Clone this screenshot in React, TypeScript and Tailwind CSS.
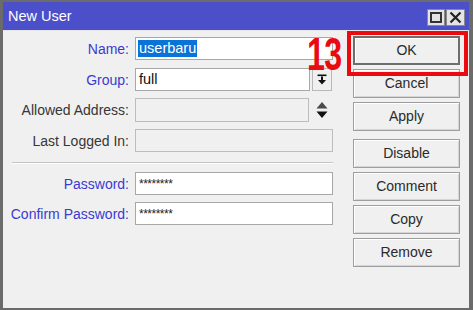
import React from "react";

const Label = ({ text, blue }: { text: string; blue?: boolean }) => (
  <div
    className={`w-[126px] text-right text-[14px] leading-none whitespace-nowrap ${
      blue ? "text-[#3a3ad0]" : "text-[#363636]"
    }`}
  >
    {text}
  </div>
);

const Btn = ({ text, main }: { text: string; main?: boolean }) => (
  <div
    className={`w-[107px] h-[29px] flex items-center justify-center text-[14px] text-[#2a2a2a] bg-[#f0f0f0] ${
      main
        ? "border-2 border-[#6e6e6e] shadow-[inset_1px_1px_0_#ffffff]"
        : "border border-[#9e9e9e] shadow-[inset_1px_1px_0_#ffffff,inset_-1px_-1px_0_#d6d6d6]"
    }`}
  >
    {text}
  </div>
);

export default function App() {
  return (
    <div className="relative w-[473px] h-[310px] bg-[#f0f0f0] border-l-[3px] border-r-[4px] border-t-2 border-b-2 border-[#6b6b6b] flex flex-col font-['Liberation_Sans',Arial,sans-serif] overflow-hidden">
      {/* title bar */}
      <div className="h-[28px] bg-[#4b4fc9] flex items-center pl-[5px] pr-[4px]">
        <span className="text-white text-[14.5px] leading-none">New User</span>
        <div className="flex-1" />
        <div className="flex gap-[1px] mt-[2px]">
          <div className="w-[18px] h-[17px] bg-[#e4e4e4] border border-[#8a8a8a] flex items-center justify-center">
            <div className="w-[12px] h-[11px] border-2 border-[#333]" />
          </div>
          <div className="w-[19px] h-[17px] bg-[#e4e4e4] border border-[#8a8a8a] flex items-center justify-center">
            <svg width="13" height="13" viewBox="0 0 13 13">
              <path d="M1.5 1.5 L11.5 11.5 M11.5 1.5 L1.5 11.5" stroke="#222" strokeWidth="2.2" />
            </svg>
          </div>
        </div>
      </div>

      {/* body */}
      <div className="flex flex-1 border-t border-[#e6e6e6]">
        {/* form */}
        <div className="w-[330px] pt-[6px] flex flex-col">
          <div className="h-[23px] flex items-center">
            <Label text="Name:" blue />
            <div className="ml-[6px] w-[198px] h-[23px] bg-white border border-[#a8a8a8] flex items-center pl-[2px]">
              <span className="bg-[#0a73d8] text-white text-[14.5px] leading-[17px] px-[1px]">userbaru</span>
            </div>
          </div>
          <div className="h-[23px] flex items-center mt-[8px]">
            <Label text="Group:" blue />
            <div className="ml-[6px] w-[175px] h-[23px] bg-white border border-[#a8a8a8] flex items-center pl-[3px] text-[14.5px] text-[#111]">
              full
            </div>
            <div className="ml-[2px] w-[20px] h-[23px] bg-[#f0f0f0] border border-[#b8b8b8] flex items-center justify-center">
              <svg width="10" height="11" viewBox="0 0 10 11">
                <rect x="0.5" y="0.5" width="9" height="1.6" fill="#111" />
                <rect x="4" y="2.5" width="2" height="4" fill="#111" />
                <path d="M1 6 L9 6 L5 10.5 Z" fill="#111" />
              </svg>
            </div>
          </div>
          <div className="h-[24px] flex items-center mt-[7px]">
            <Label text="Allowed Address:" />
            <div className="ml-[6px] w-[174px] h-[24px] bg-[#f0f0f0] border border-[#bdbdbd]" />
            <div className="ml-[4px] w-[18px] h-[24px] flex items-center justify-center">
              <svg width="12" height="18" viewBox="0 0 12 18">
                <path d="M6 1 L11.5 7.5 L0.5 7.5 Z" fill="#4a4a4a" />
                <path d="M0.5 10.5 L11.5 10.5 L6 17 Z" fill="#111" />
              </svg>
            </div>
          </div>
          <div className="h-[23px] flex items-center mt-[7px]">
            <Label text="Last Logged In:" />
            <div className="ml-[6px] w-[198px] h-[23px] bg-[#f0f0f0] border border-[#bdbdbd]" />
          </div>
          <div className="ml-[9px] w-[321px] mt-[10px] border-t border-[#c4c4c4] border-b border-b-white" />
          <div className="h-[23px] flex items-center mt-[8px]">
            <Label text="Password:" blue />
            <div className="ml-[6px] w-[198px] h-[23px] bg-white border border-[#a8a8a8] flex items-start pl-[3px] pt-[2px] text-[12px] text-[#222] tracking-[-0.5px]">
              ********
            </div>
          </div>
          <div className="h-[23px] flex items-center mt-[7px]">
            <Label text="Confirm Password:" blue />
            <div className="ml-[6px] w-[198px] h-[23px] bg-white border border-[#a8a8a8] flex items-start pl-[3px] pt-[2px] text-[12px] text-[#222] tracking-[-0.5px]">
              ********
            </div>
          </div>
        </div>

        {/* buttons */}
        <div className="pl-[20px] pt-[5px] flex flex-col gap-[4px]">
          <Btn text="OK" main />
          <Btn text="Cancel" />
          <Btn text="Apply" />
          <div className="mt-[4px]">
            <Btn text="Disable" />
          </div>
          <Btn text="Comment" />
          <Btn text="Copy" />
          <Btn text="Remove" />
        </div>
      </div>

      {/* annotation overlays */}
      <div className="absolute left-[344px] top-[29px] w-[121px] h-[45px] border-[4px] border-[#ea0a10] pointer-events-none" />
      <div className="absolute left-[304px] top-[29px] text-[46px] leading-none font-bold text-[#ea0a10] origin-left scale-x-[0.7] tracking-[-1px]">
        13
      </div>
    </div>
  );
}
